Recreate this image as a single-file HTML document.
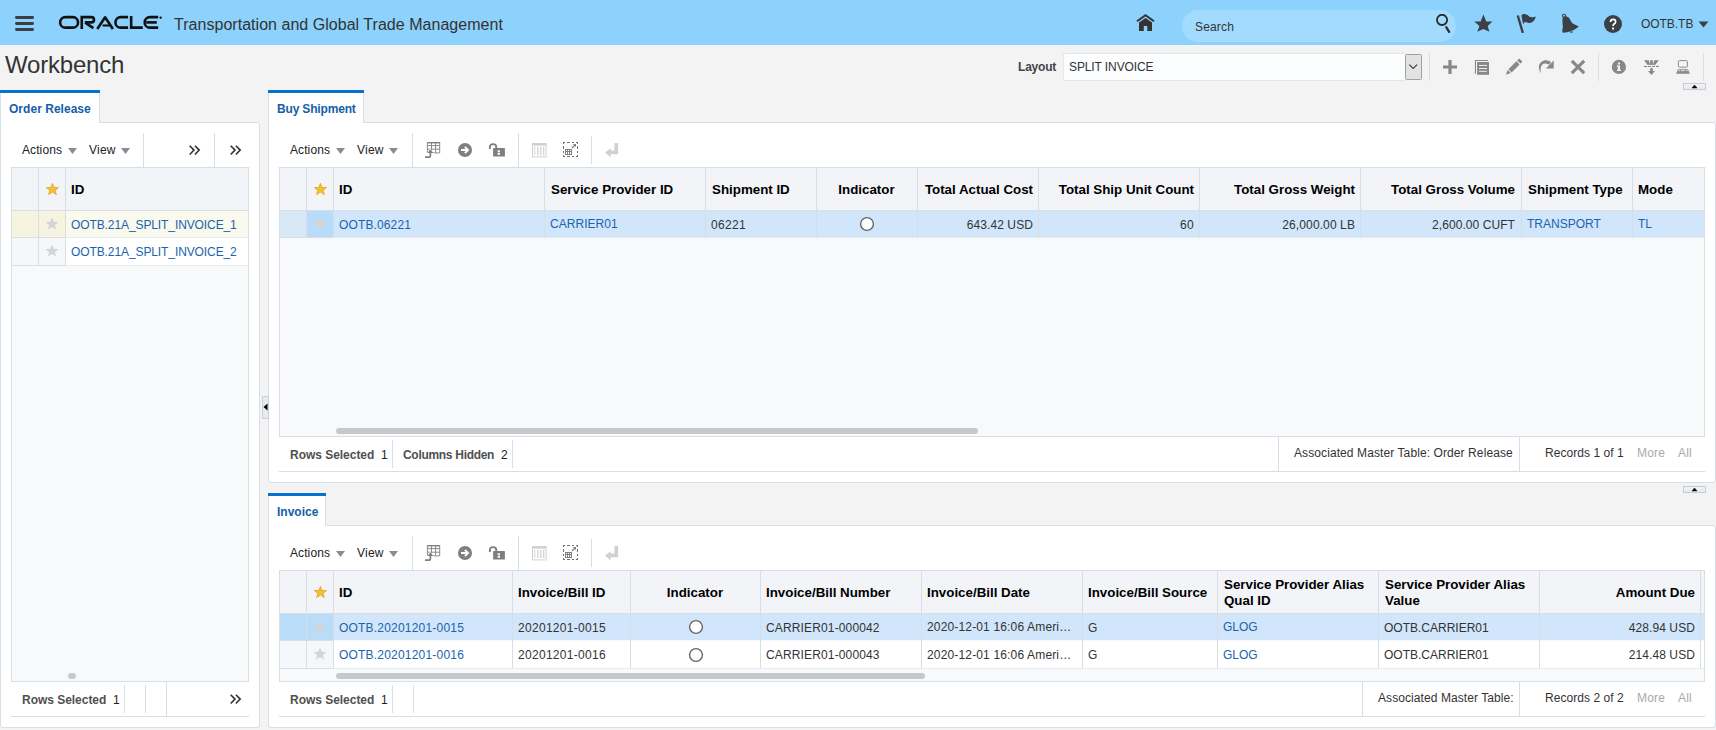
<!DOCTYPE html>
<html><head><meta charset="utf-8"><style>
html,body{margin:0;padding:0}
body{width:1716px;height:730px;overflow:hidden;position:relative;background:#f3f3f3;font-family:"Liberation Sans",sans-serif}
.t{position:absolute;white-space:nowrap}
.b{position:absolute;display:block}
</style></head><body>
<div class="b" style="left:0px;top:0px;width:1716px;height:45px;background:#8dd2fc"></div>
<svg class="b" style="left:14px;top:0px;" width="21" height="45" viewBox="0 0 21 45"><rect x="1" y="16.1" width="19" height="2.8" rx="1.4" fill="#3a3f44"/><rect x="1" y="22.1" width="19" height="2.8" rx="1.4" fill="#3a3f44"/><rect x="1" y="28.1" width="19" height="2.8" rx="1.4" fill="#3a3f44"/></svg>
<svg class="b" style="left:55px;top:12px;" width="110" height="22" viewBox="0 0 110 22"><g fill="none" stroke="#111" stroke-width="2.6">
<rect x="5.15" y="5.15" width="17.9" height="10.5" rx="5.25"/>
<path d="M26.75 16.9 V5.15 H36.4 A2.6 2.6 0 0 1 36.4 10.35 H29.8"/><path d="M30.3 10.6 L38.4 16.1" stroke-width="2.8"/>
<path d="M42.3 16.9 L50.1 5.3 L57.9 16.9" stroke-linejoin="round"/>
<path d="M47.6 13.5 H55.2" stroke-width="2.1"/>
<path d="M73.1 5.15 H65.7 A5.25 5.25 0 0 0 65.7 15.65 H73.1"/>
<path d="M76.15 4 V15.65 H87.8"/>
<path d="M103.2 5.15 H94.9 A5.25 5.25 0 0 0 94.9 15.65 H103.2"/>
<path d="M91.2 10.4 H101.8"/>
</g><circle cx="105.7" cy="5.6" r="1.2" fill="#111"/></svg>
<div class="t" style="left:174px;top:16.46px;font-size:16px;line-height:18px;font-weight:400;color:#333;letter-spacing:0.030px;">Transportation and Global Trade Management</div>
<svg class="b" style="left:1136px;top:13px;" width="19" height="19" viewBox="0 0 19 19"><path d="M1 8.2 L9.5 2.2 L18 8.2" fill="none" stroke="#333" stroke-width="2"/>
<path d="M3 9.5 L9.5 5 L16 9.5 V18 H11.3 V13 H7.8 V18 H3 Z" fill="#333"/></svg>
<div class="b" style="left:1182px;top:10px;width:274px;height:32px;background:#a2dbfd;border-radius:16px"></div>
<div class="t" style="left:1195px;top:19.84px;font-size:12px;line-height:14px;font-weight:400;color:#333;letter-spacing:0.164px;">Search</div>
<svg class="b" style="left:1435px;top:14px;" width="17" height="19" viewBox="0 0 17 19"><circle cx="7.05" cy="5.9" r="5.1" fill="none" stroke="#2a2a2a" stroke-width="1.8"/>
<path d="M11.2 13.1 L14.1 17.9" stroke="#2a2a2a" stroke-width="2.2" stroke-linecap="round"/></svg>
<svg class="b" style="left:1474px;top:14px;" width="19" height="19" viewBox="0 0 19 19"><path d="M9.4 0.5 L12.3 7.4 L18.4 7.4 L13.7 11.9 L15.4 17.8 L9.4 15 L3.3 17.8 L5.4 11.9 L0.3 7.4 L6.6 7.4 Z" fill="#3b4046"/></svg>
<svg class="b" style="left:1516px;top:13px;" width="21" height="20" viewBox="0 0 21 20"><path d="M2 3.4 L6.6 19.1" stroke="#3b4046" stroke-width="2.3" stroke-linecap="round"/>
<path d="M5.4 2.4 Q7 0.6 8.9 1.1 Q11.5 1.8 13.7 3.7 Q16.5 5 19.8 3.5 Q19 7 17.6 8.1 Q15.5 10.3 13.2 10.1 Q11 9.7 9.3 9 Q7.8 9.2 7.1 11.2 Z" fill="#3b4046"/></svg>
<svg class="b" style="left:1561px;top:13px;" width="19" height="21" viewBox="0 0 19 21"><circle cx="3" cy="2.8" r="1.6" fill="none" stroke="#3b4046" stroke-width="1.1"/>
<path d="M1.8 4.8 Q3.5 3 5.7 3.4 Q8.5 4 9.4 7.2 Q10.5 10 13.2 11.2 L17.8 13.4 Q14.5 16.5 11 17.7 Q6 19.5 2.1 19.8 Q1 19 1.3 17 Q2.3 14 1.6 10.5 Q1 7 1.8 4.8 Z" fill="#3b4046"/>
<path d="M9.2 18.6 Q10.5 19.9 11.8 18.7" fill="none" stroke="#3b4046" stroke-width="1.1"/></svg>
<svg class="b" style="left:1604px;top:15px;" width="18" height="18" viewBox="0 0 18 18"><circle cx="9" cy="9" r="9" fill="#3b4046"/>
<path d="M6.5 7 Q6.5 4.4 9.1 4.4 Q11.6 4.4 11.6 6.7 Q11.6 8.1 10.1 9 Q9.1 9.6 9.1 11" fill="none" stroke="#fff" stroke-width="1.7"/>
<rect x="8.1" y="12.5" width="2" height="2" fill="#fff"/></svg>
<div class="t" style="left:1641px;top:16.84px;font-size:12px;line-height:14px;font-weight:400;color:#333;letter-spacing:-0.048px;">OOTB.TB</div>
<svg class="b" style="left:1698px;top:21px;" width="11" height="7" viewBox="0 0 11 7"><path d="M0.5 0.5 H10.5 L5.5 6.5 Z" fill="#3b4046"/></svg>
<div class="t" style="left:5px;top:50.68px;font-size:24px;line-height:28px;font-weight:400;color:#333;letter-spacing:-0.192px;">Workbench</div>
<div class="t" style="left:1018px;top:59.84px;font-size:12px;line-height:14px;font-weight:700;color:#444;letter-spacing:-0.200px;">Layout</div>
<div class="b" style="left:1063px;top:53px;width:343px;height:28px;background:#fcfdfe;border:1px solid #e2e7ea;border-right:none;border-radius:2px 0 0 2px;box-sizing:border-box"></div>
<div class="t" style="left:1069px;top:59.84px;font-size:12px;line-height:14px;font-weight:400;color:#333;letter-spacing:-0.103px;">SPLIT INVOICE</div>
<div class="b" style="left:1405px;top:54px;width:17px;height:26px;background:#e2e2e2;border:1px solid #a2a2a2;border-radius:1.5px;box-sizing:border-box"></div>
<svg class="b" style="left:1408px;top:63px;" width="11" height="7" viewBox="0 0 11 7"><path d="M1.3 1.6 L5.2 5.4 L9.1 1.6" fill="none" stroke="#444" stroke-width="1.3"/></svg>
<div class="b" style="left:1429px;top:53px;width:1px;height:28px;background:#d6dfe6"></div>
<svg class="b" style="left:1442px;top:59px;" width="16" height="16" viewBox="0 0 16 16"><path d="M8 1 V15 M1 8 H15" stroke="#868889" stroke-width="3.2"/></svg>
<svg class="b" style="left:1472px;top:58px;" width="19" height="19" viewBox="0 0 19 19"><path d="M3.45 15.8 V2.45 H16" fill="none" stroke="#868889" stroke-width="1.1"/>
<rect x="5.1" y="4" width="11.9" height="12.8" fill="#868889"/>
<path d="M7 7.45 H14.9 M7 10.5 H14.9 M7 13.35 H14.9" stroke="#f3f3f3" stroke-width="0.95"/></svg>
<svg class="b" style="left:1504px;top:58px;" width="19" height="19" viewBox="0 0 19 19"><path d="M1.9 16.8 L3.6 11.9 L6.8 15.1 Z" fill="#868889"/>
<path d="M4.4 11.2 L12.4 3.2 L15.6 6.4 L7.6 14.4 Z" fill="#868889"/>
<path d="M13.2 2.4 L14.6 1 Q15.2 0.5 15.8 1 L17.8 3 Q18.3 3.6 17.8 4.2 L16.4 5.6 Z" fill="#868889"/></svg>
<svg class="b" style="left:1537px;top:58px;" width="18" height="17" viewBox="0 0 18 17"><path d="M3.8 15.3 C1.2 11 1.2 6.5 4.3 4 C7.3 1.5 11 1.8 14 4.2 L12 6.8 C9.5 5 7 5 5.2 6.8 C3.5 8.5 3.3 11.5 3.8 15.3 Z" fill="#868889"/>
<path d="M16.7 2.4 V10.6 H8.9 Z" fill="#868889"/></svg>
<svg class="b" style="left:1570px;top:59px;" width="16" height="16" viewBox="0 0 16 16"><path d="M1.8 1.8 L14.2 14.2 M14.2 1.8 L1.8 14.2" stroke="#868889" stroke-width="3.1"/></svg>
<div class="b" style="left:1598px;top:53px;width:1px;height:28px;background:#d6dfe6"></div>
<svg class="b" style="left:1611px;top:59px;" width="16" height="16" viewBox="0 0 16 16"><circle cx="7.9" cy="7.9" r="7.1" fill="#868889"/>
<rect x="6.9" y="3.6" width="2.1" height="1.9" fill="#f3f3f3"/>
<path d="M5.9 6.6 H9 V10.8 H10 V12.1 H5.9 V10.8 H6.9 V7.9 H5.9 Z" fill="#f3f3f3"/></svg>
<svg class="b" style="left:1642px;top:58px;" width="19" height="19" viewBox="0 0 19 19"><path d="M1.9 2.2 H6.9 L7.7 6 L5.5 6.7 Z M12.2 2.2 H16.9 L13.3 6.7 L11.3 6 Z" fill="#868889"/>
<rect x="8.2" y="2.2" width="2.6" height="4.5" fill="#868889"/><rect x="5.5" y="5.7" width="7.8" height="1" fill="#868889"/>
<rect x="1.9" y="7.9" width="3.1" height="1.1" fill="#868889"/><rect x="6" y="7.9" width="2.9" height="1.1" fill="#868889"/>
<rect x="10.1" y="7.9" width="2.9" height="1.1" fill="#868889"/><rect x="14" y="7.9" width="3" height="1.1" fill="#868889"/>
<rect x="8.2" y="10.1" width="2.6" height="3.1" fill="#868889"/><path d="M6 13.1 H13 L9.5 17 Z" fill="#868889"/></svg>
<svg class="b" style="left:1675px;top:58px;" width="16" height="17" viewBox="0 0 16 17"><rect x="3.4" y="2.6" width="9" height="6.6" rx="1" fill="none" stroke="#868889" stroke-width="0.95"/>
<path d="M2.9 11.3 H12.9 L14.9 15.8 H1 Z" fill="#868889"/>
<path d="M3.2 12.65 H4.9 M5.9 12.65 H9.8 M10.9 12.65 H12.6" stroke="#f3f3f3" stroke-width="0.9"/></svg>
<div class="b" style="left:1703px;top:53px;width:1px;height:28px;background:#d6dfe6"></div>
<div class="b" style="left:0px;top:90px;width:100px;height:33px;background:#fff;border-left:1px solid #d6dfe6;border-right:1px solid #d6dfe6;box-sizing:border-box"></div>
<div class="b" style="left:0px;top:90px;width:100px;height:3px;background:#0572ce"></div>
<div class="t" style="left:9px;top:101.84px;font-size:12px;line-height:14px;font-weight:700;color:#155ea8;letter-spacing:0.030px;">Order Release</div>
<div class="b" style="left:0px;top:122px;width:260px;height:606px;background:#fff;border:1px solid #d6dfe6;border-radius:3px;box-sizing:border-box"></div>
<div class="b" style="left:1px;top:122px;width:98px;height:1px;background:#fff"></div>
<div class="t" style="left:22px;top:142.84px;font-size:12px;line-height:14px;font-weight:400;color:#222;letter-spacing:0.093px;">Actions</div>
<svg class="b" style="left:68px;top:148px;" width="9" height="6" viewBox="0 0 9 6"><path d="M0 0 H9 L4.5 6 Z" fill="#8a8c8f"/></svg>
<div class="t" style="left:89px;top:142.84px;font-size:12px;line-height:14px;font-weight:400;color:#222;letter-spacing:0.249px;">View</div>
<svg class="b" style="left:121px;top:148px;" width="9" height="6" viewBox="0 0 9 6"><path d="M0 0 H9 L4.5 6 Z" fill="#8a8c8f"/></svg>
<div class="b" style="left:143px;top:133px;width:1px;height:34px;background:#d6dfe6"></div>
<svg class="b" style="left:189px;top:145px;" width="12" height="11" viewBox="0 0 12 11"><path d="M0.7 0.7 L5 5.1 L0.7 9.5 M5.9 0.7 L10.2 5.1 L5.9 9.5" fill="none" stroke="#333" stroke-width="1.6"/></svg>
<div class="b" style="left:214px;top:133px;width:1px;height:34px;background:#d6dfe6"></div>
<svg class="b" style="left:230px;top:145px;" width="12" height="11" viewBox="0 0 12 11"><path d="M0.7 0.7 L5 5.1 L0.7 9.5 M5.9 0.7 L10.2 5.1 L5.9 9.5" fill="none" stroke="#333" stroke-width="1.6"/></svg>
<div class="b" style="left:11px;top:167px;width:238px;height:515px;background:#f7f9fb"></div>
<div class="b" style="left:11px;top:167px;width:238px;height:43px;background:#f2f4f7"></div>
<div class="b" style="left:11px;top:211px;width:54px;height:26px;background:#f4f4e1"></div>
<div class="b" style="left:65px;top:211px;width:183px;height:26px;background:#f9f9ee"></div>
<div class="b" style="left:11px;top:238px;width:54px;height:27px;background:#f5f7fa"></div>
<div class="b" style="left:65px;top:238px;width:183px;height:27px;background:#fff"></div>
<div class="b" style="left:11px;top:167px;width:238px;height:1px;background:#d6dfe6"></div>
<div class="b" style="left:11px;top:681px;width:238px;height:1px;background:#d6dfe6"></div>
<div class="b" style="left:11px;top:167px;width:1px;height:515px;background:#d6dfe6"></div>
<div class="b" style="left:248px;top:167px;width:1px;height:515px;background:#d6dfe6"></div>
<div class="b" style="left:11px;top:210px;width:238px;height:1px;background:#d6dfe6"></div>
<div class="b" style="left:11px;top:237px;width:55px;height:1px;background:#d6dfe6"></div>
<div class="b" style="left:65px;top:237px;width:184px;height:1px;background:#e6ebef"></div>
<div class="b" style="left:11px;top:265px;width:55px;height:1px;background:#d6dfe6"></div>
<div class="b" style="left:65px;top:265px;width:184px;height:1px;background:#e6ebef"></div>
<div class="b" style="left:38px;top:167px;width:1px;height:99px;background:#d6dfe6"></div>
<div class="b" style="left:65px;top:167px;width:1px;height:99px;background:#d6dfe6"></div>
<svg class="b" style="left:45.5px;top:182.5px;" width="14" height="13" viewBox="0 0 14 13"><path transform="scale(0.92)" d="M7 0.4 L8.75 4.85 L13.6 5 L9.85 8.1 L11.25 12.6 L7 9.9 L2.75 12.6 L4.15 8.1 L0.4 5 L5.25 4.85 Z" fill="#f5c12e" stroke="#d9a21b" stroke-width="0.8" stroke-linejoin="round"/></svg>
<div class="t" style="left:71px;top:181.88px;font-size:13.33px;line-height:15px;font-weight:700;color:#000;">ID</div>
<svg class="b" style="left:45px;top:217px;" width="14" height="13" viewBox="0 0 14 13"><path transform="scale(1.0)" d="M7 0.4 L8.75 4.85 L13.6 5 L9.85 8.1 L11.25 12.6 L7 9.9 L2.75 12.6 L4.15 8.1 L0.4 5 L5.25 4.85 Z" fill="#d4d4d4"/></svg>
<svg class="b" style="left:45px;top:244px;" width="14" height="13" viewBox="0 0 14 13"><path transform="scale(1.0)" d="M7 0.4 L8.75 4.85 L13.6 5 L9.85 8.1 L11.25 12.6 L7 9.9 L2.75 12.6 L4.15 8.1 L0.4 5 L5.25 4.85 Z" fill="#d4d4d4"/></svg>
<div class="t" style="left:71px;top:217.84px;font-size:12px;line-height:14px;font-weight:400;color:#1b63ae;letter-spacing:-0.099px;">OOTB.21A_SPLIT_INVOICE_1</div>
<div class="t" style="left:71px;top:244.84px;font-size:12px;line-height:14px;font-weight:400;color:#1b63ae;letter-spacing:-0.099px;">OOTB.21A_SPLIT_INVOICE_2</div>
<div class="b" style="left:68px;top:673px;width:8px;height:6px;background:#c7c9cc;border-radius:3px"></div>
<div class="t" style="left:22px;top:692.84px;font-size:12px;line-height:14px;font-weight:700;color:#505050;letter-spacing:-0.030px;">Rows Selected</div>
<div class="t" style="left:113px;top:692.84px;font-size:12px;line-height:14px;font-weight:400;color:#222;letter-spacing:0.326px;">1</div>
<div class="b" style="left:124px;top:685px;width:1px;height:28px;background:#d6dfe6"></div>
<div class="b" style="left:145px;top:685px;width:1px;height:28px;background:#d6dfe6"></div>
<div class="b" style="left:166px;top:682px;width:1px;height:35px;background:#d6dfe6"></div>
<svg class="b" style="left:230px;top:694px;" width="12" height="11" viewBox="0 0 12 11"><path d="M0.7 0.7 L5 5.1 L0.7 9.5 M5.9 0.7 L10.2 5.1 L5.9 9.5" fill="none" stroke="#333" stroke-width="1.6"/></svg>
<div class="b" style="left:11px;top:716px;width:238px;height:1px;background:#d6dfe6"></div>
<div class="b" style="left:268px;top:90px;width:96px;height:33px;background:#fff;border-left:1px solid #d6dfe6;border-right:1px solid #d6dfe6;box-sizing:border-box"></div>
<div class="b" style="left:268px;top:90px;width:96px;height:3px;background:#0572ce"></div>
<div class="t" style="left:277px;top:101.84px;font-size:12px;line-height:14px;font-weight:700;color:#155ea8;letter-spacing:-0.170px;">Buy Shipment</div>
<div class="b" style="left:268px;top:122px;width:1448px;height:361px;background:#fff;border:1px solid #d6dfe6;border-radius:3px;box-sizing:border-box"></div>
<div class="b" style="left:269px;top:122px;width:94px;height:1px;background:#fff"></div>
<div class="t" style="left:290px;top:142.84px;font-size:12px;line-height:14px;font-weight:400;color:#222;letter-spacing:0.093px;">Actions</div>
<svg class="b" style="left:336px;top:148px;" width="9" height="6" viewBox="0 0 9 6"><path d="M0 0 H9 L4.5 6 Z" fill="#8a8c8f"/></svg>
<div class="t" style="left:357px;top:142.84px;font-size:12px;line-height:14px;font-weight:400;color:#222;letter-spacing:0.249px;">View</div>
<svg class="b" style="left:389px;top:148px;" width="9" height="6" viewBox="0 0 9 6"><path d="M0 0 H9 L4.5 6 Z" fill="#8a8c8f"/></svg>
<div class="b" style="left:412px;top:133px;width:1px;height:34px;background:#d6dfe6"></div>
<svg class="b" style="left:424px;top:141px;" width="18" height="18" viewBox="0 0 18 18"><path d="M3.5 1 H15.8 V2.4 H3.5 Z" fill="#7d7f82"/>
<path d="M3.4 1 V11.9 H15.7 V1 M3.4 4.6 H15.7 M3.4 8.2 H15.7 M7.5 1 V11.9 M11.6 1 V11.9" fill="none" stroke="#7d7f82" stroke-width="0.9"/>
<path d="M2.3 13 L6.3 7.3 L10.3 13 L7.8 13 V16.5 H2.3 Z" fill="#fff"/>
<path d="M1 16.2 H5.1 Q6.4 16.2 6.4 14.9 V11" fill="none" stroke="#7d7f82" stroke-width="1.7"/>
<path d="M3.4 11.9 L6.4 8.2 L9.4 11.9 Z" fill="#7d7f82"/></svg>
<svg class="b" style="left:458px;top:143px;" width="15" height="15" viewBox="0 0 15 15"><circle cx="7" cy="7" r="7" fill="#7d7f82"/>
<path d="M3 7 H9.6 M6.9 3.9 L10 7 L6.9 10.1" fill="none" stroke="#fff" stroke-width="2"/></svg>
<svg class="b" style="left:488px;top:142px;" width="18" height="17" viewBox="0 0 18 17"><path d="M1.9 6.9 V5.3 Q1.9 2.1 5.1 2.1 Q8.3 2.1 8.3 5.3 V6.5" fill="none" stroke="#7d7f82" stroke-width="1.9"/>
<rect x="5.1" y="6" width="11.8" height="8.6" rx="0.6" fill="#7d7f82"/>
<rect x="9.6" y="8.3" width="2.4" height="1.6" fill="#fff"/><rect x="9.6" y="10.7" width="2.4" height="2.1" fill="#fff"/></svg>
<div class="b" style="left:518px;top:133px;width:1px;height:34px;background:#d6dfe6"></div>
<svg class="b" style="left:532px;top:143px;" width="15" height="15" viewBox="0 0 15 15"><rect x="0.5" y="0.5" width="13.6" height="13.4" fill="none" stroke="#cfd1d3" stroke-width="1"/>
<path d="M0.5 0.5 H14.1 V2.6 H0.5 Z" fill="#cfd1d3"/>
<path d="M5.9 3.8 V12.2 M8.8 3.8 V12.2 M11.7 3.8 V12.2" stroke="#cfd1d3" stroke-width="1.3"/>
<path d="M3.2 3.6 L2.4 5 L3.2 6.4 L2.4 7.8 L3.2 9.2 L2.4 10.6 L3.2 12" fill="none" stroke="#cfd1d3" stroke-width="0.9"/></svg>
<svg class="b" style="left:563px;top:142px;" width="16" height="16" viewBox="0 0 16 16"><g fill="#6f7174"><rect x="0" y="0" width="2" height="1"/><rect x="0" y="14" width="2" height="1"/><rect x="4" y="0" width="3" height="1"/><rect x="4" y="14" width="3" height="1"/><rect x="9" y="0" width="2" height="1"/><rect x="9" y="14" width="2" height="1"/><rect x="13" y="0" width="2" height="1"/><rect x="13" y="14" width="2" height="1"/><rect x="0" y="0" width="1" height="2"/><rect x="14" y="0" width="1" height="2"/><rect x="0" y="4" width="1" height="3"/><rect x="14" y="4" width="1" height="3"/><rect x="0" y="9" width="1" height="2"/><rect x="14" y="9" width="1" height="2"/><rect x="0" y="13" width="1" height="2"/><rect x="14" y="13" width="1" height="2"/></g>
<path d="M9 6 L12 3" stroke="#7d7f82" stroke-width="1.2"/><path d="M10 2 H13 V5 Z" fill="#7d7f82"/>
<rect x="2.5" y="7.5" width="6" height="5" fill="none" stroke="#7d7f82" stroke-width="1"/>
<path d="M2.5 9.5 H8.5 M4.5 7.5 V12.5 M6.5 7.5 V12.5" stroke="#7d7f82" stroke-width="1"/></svg>
<div class="b" style="left:591px;top:136px;width:1px;height:28px;background:#d6dfe6"></div>
<svg class="b" style="left:604px;top:142px;" width="15" height="16" viewBox="0 0 15 16"><path d="M12.3 1 V10.3 H5.6" fill="none" stroke="#cfd1d3" stroke-width="3.7"/>
<path d="M1 10.5 L6.6 6.2 V15.6 Z" fill="#cfd1d3"/></svg>
<div class="b" style="left:1683px;top:83px;width:23px;height:7px;background:linear-gradient(#f2f3f5,#e6e9ec);border:1px solid #c5ced6;box-sizing:border-box"></div>
<svg class="b" style="left:1691px;top:84px;" width="7" height="5" viewBox="0 0 7 5"><path d="M1 4 L6 4 L3.5 1 Z" fill="#000" stroke="#000" stroke-width="0.5" stroke-linejoin="round"/></svg>
<div class="b" style="left:279px;top:167px;width:1426px;height:270px;background:#f7f9fb"></div>
<div class="b" style="left:279px;top:167px;width:1426px;height:43px;background:#f2f4f7"></div>
<div class="b" style="left:279px;top:211px;width:27px;height:26px;background:#d8e7f5"></div>
<div class="b" style="left:306px;top:211px;width:27px;height:26px;background:#b9ddf9"></div>
<div class="b" style="left:333px;top:211px;width:1371px;height:26px;background:#d1e6fa"></div>
<div class="b" style="left:279px;top:167px;width:1426px;height:1px;background:#d6dfe6"></div>
<div class="b" style="left:279px;top:436px;width:1426px;height:1px;background:#d6dfe6"></div>
<div class="b" style="left:279px;top:167px;width:1px;height:270px;background:#d6dfe6"></div>
<div class="b" style="left:1704px;top:167px;width:1px;height:270px;background:#d6dfe6"></div>
<div class="b" style="left:279px;top:210px;width:1426px;height:1px;background:#d6dfe6"></div>
<div class="b" style="left:279px;top:237px;width:55px;height:1px;background:#d6dfe6"></div>
<div class="b" style="left:333px;top:237px;width:1372px;height:1px;background:#e6ebef"></div>
<div class="b" style="left:306px;top:167px;width:1px;height:71px;background:#d6dfe6"></div>
<div class="b" style="left:333px;top:167px;width:1px;height:71px;background:#d6dfe6"></div>
<div class="b" style="left:544px;top:167px;width:1px;height:71px;background:#d6dfe6"></div>
<div class="b" style="left:705px;top:167px;width:1px;height:71px;background:#d6dfe6"></div>
<div class="b" style="left:816px;top:167px;width:1px;height:71px;background:#d6dfe6"></div>
<div class="b" style="left:917px;top:167px;width:1px;height:71px;background:#d6dfe6"></div>
<div class="b" style="left:1038px;top:167px;width:1px;height:71px;background:#d6dfe6"></div>
<div class="b" style="left:1199px;top:167px;width:1px;height:71px;background:#d6dfe6"></div>
<div class="b" style="left:1360px;top:167px;width:1px;height:71px;background:#d6dfe6"></div>
<div class="b" style="left:1521px;top:167px;width:1px;height:71px;background:#d6dfe6"></div>
<div class="b" style="left:1632px;top:167px;width:1px;height:71px;background:#d6dfe6"></div>
<svg class="b" style="left:313.5px;top:182.5px;" width="14" height="13" viewBox="0 0 14 13"><path transform="scale(0.92)" d="M7 0.4 L8.75 4.85 L13.6 5 L9.85 8.1 L11.25 12.6 L7 9.9 L2.75 12.6 L4.15 8.1 L0.4 5 L5.25 4.85 Z" fill="#f5c12e" stroke="#d9a21b" stroke-width="0.8" stroke-linejoin="round"/></svg>
<svg class="b" style="left:313px;top:217px;" width="14" height="13" viewBox="0 0 14 13"><path transform="scale(1.0)" d="M7 0.4 L8.75 4.85 L13.6 5 L9.85 8.1 L11.25 12.6 L7 9.9 L2.75 12.6 L4.15 8.1 L0.4 5 L5.25 4.85 Z" fill="#d4d4d4"/></svg>
<div class="t" style="left:339px;top:181.88px;font-size:13.33px;line-height:15px;font-weight:700;color:#000;">ID</div>
<div class="t" style="left:551px;top:181.88px;font-size:13.33px;line-height:15px;font-weight:700;color:#000;">Service Provider ID</div>
<div class="t" style="left:712px;top:181.88px;font-size:13.33px;line-height:15px;font-weight:700;color:#000;">Shipment ID</div>
<div class="t" style="left:566.5px;width:600px;text-align:center;top:181.88px;font-size:13.33px;line-height:15px;font-weight:700;color:#000;">Indicator</div>
<div class="t" style="left:433px;width:600px;text-align:right;top:181.88px;font-size:13.33px;line-height:15px;font-weight:700;color:#000;">Total Actual Cost</div>
<div class="t" style="left:594px;width:600px;text-align:right;top:181.88px;font-size:13.33px;line-height:15px;font-weight:700;color:#000;">Total Ship Unit Count</div>
<div class="t" style="left:755px;width:600px;text-align:right;top:181.88px;font-size:13.33px;line-height:15px;font-weight:700;color:#000;">Total Gross Weight</div>
<div class="t" style="left:915px;width:600px;text-align:right;top:181.88px;font-size:13.33px;line-height:15px;font-weight:700;color:#000;">Total Gross Volume</div>
<div class="t" style="left:1528px;top:181.88px;font-size:13.33px;line-height:15px;font-weight:700;color:#000;">Shipment Type</div>
<div class="t" style="left:1638px;top:181.88px;font-size:13.33px;line-height:15px;font-weight:700;color:#000;">Mode</div>
<div class="t" style="left:339px;top:217.84px;font-size:12px;line-height:14px;font-weight:400;color:#1b63ae;letter-spacing:0.130px;">OOTB.06221</div>
<div class="t" style="left:550px;top:216.84px;font-size:12px;line-height:14px;font-weight:400;color:#1b63ae;letter-spacing:0.035px;">CARRIER01</div>
<div class="t" style="left:711px;top:217.84px;font-size:12px;line-height:14px;font-weight:400;color:#333333;letter-spacing:0.326px;">06221</div>
<svg class="b" style="left:859px;top:216px;" width="16" height="16" viewBox="0 0 16 16"><circle cx="8" cy="8" r="6.4" fill="#fff" stroke="#666" stroke-width="1.4"/></svg>
<div class="t" style="left:433px;width:600px;text-align:right;top:217.84px;font-size:12px;line-height:14px;font-weight:400;color:#333333;letter-spacing:0.096px;">643.42 USD</div>
<div class="t" style="left:594px;width:600px;text-align:right;top:217.84px;font-size:12px;line-height:14px;font-weight:400;color:#333333;letter-spacing:0.326px;">60</div>
<div class="t" style="left:755px;width:600px;text-align:right;top:217.84px;font-size:12px;line-height:14px;font-weight:400;color:#333333;letter-spacing:0.107px;">26,000.00 LB</div>
<div class="t" style="left:915px;width:600px;text-align:right;top:217.84px;font-size:12px;line-height:14px;font-weight:400;color:#333333;letter-spacing:0.073px;">2,600.00 CUFT</div>
<div class="t" style="left:1527px;top:216.84px;font-size:12px;line-height:14px;font-weight:400;color:#1b63ae;">TRANSPORT</div>
<div class="t" style="left:1638px;top:216.84px;font-size:12px;line-height:14px;font-weight:400;color:#1b63ae;">TL</div>
<div class="b" style="left:336px;top:428px;width:642px;height:6px;background:#c6c8cc;border-radius:3px"></div>
<div class="t" style="left:290px;top:447.84px;font-size:12px;line-height:14px;font-weight:700;color:#505050;letter-spacing:-0.030px;">Rows Selected</div>
<div class="t" style="left:381px;top:447.84px;font-size:12px;line-height:14px;font-weight:400;color:#222;letter-spacing:0.326px;">1</div>
<div class="b" style="left:392px;top:440px;width:1px;height:28px;background:#d6dfe6"></div>
<div class="t" style="left:403px;top:447.84px;font-size:12px;line-height:14px;font-weight:700;color:#505050;letter-spacing:-0.300px;">Columns Hidden</div>
<div class="t" style="left:501px;top:447.84px;font-size:12px;line-height:14px;font-weight:400;color:#222;letter-spacing:0.326px;">2</div>
<div class="b" style="left:512px;top:440px;width:1px;height:28px;background:#d6dfe6"></div>
<div class="b" style="left:1278px;top:437px;width:1px;height:35px;background:#d6dfe6"></div>
<div class="t" style="left:1294px;top:445.84px;font-size:12px;line-height:14px;font-weight:400;color:#333;letter-spacing:0.094px;">Associated Master Table: Order Release</div>
<div class="b" style="left:1519px;top:437px;width:1px;height:35px;background:#d6dfe6"></div>
<div class="t" style="left:1545px;top:445.84px;font-size:12px;line-height:14px;font-weight:400;color:#333;letter-spacing:0.045px;">Records 1 of 1</div>
<div class="t" style="left:1637px;top:445.84px;font-size:12px;line-height:14px;font-weight:400;color:#aaa;letter-spacing:0.164px;">More</div>
<div class="t" style="left:1678px;top:445.84px;font-size:12px;line-height:14px;font-weight:400;color:#aaa;letter-spacing:0.223px;">All</div>
<div class="b" style="left:279px;top:471px;width:1426px;height:1px;background:#d6dfe6"></div>
<div class="b" style="left:268px;top:493px;width:58px;height:33px;background:#fff;border-left:1px solid #d6dfe6;border-right:1px solid #d6dfe6;box-sizing:border-box"></div>
<div class="b" style="left:268px;top:493px;width:58px;height:3px;background:#0572ce"></div>
<div class="t" style="left:277px;top:504.84px;font-size:12px;line-height:14px;font-weight:700;color:#155ea8;">Invoice</div>
<div class="b" style="left:268px;top:525px;width:1448px;height:203px;background:#fff;border:1px solid #d6dfe6;border-radius:3px;box-sizing:border-box"></div>
<div class="b" style="left:269px;top:525px;width:56px;height:1px;background:#fff"></div>
<div class="t" style="left:290px;top:545.84px;font-size:12px;line-height:14px;font-weight:400;color:#222;letter-spacing:0.093px;">Actions</div>
<svg class="b" style="left:336px;top:551px;" width="9" height="6" viewBox="0 0 9 6"><path d="M0 0 H9 L4.5 6 Z" fill="#8a8c8f"/></svg>
<div class="t" style="left:357px;top:545.84px;font-size:12px;line-height:14px;font-weight:400;color:#222;letter-spacing:0.249px;">View</div>
<svg class="b" style="left:389px;top:551px;" width="9" height="6" viewBox="0 0 9 6"><path d="M0 0 H9 L4.5 6 Z" fill="#8a8c8f"/></svg>
<div class="b" style="left:412px;top:536px;width:1px;height:34px;background:#d6dfe6"></div>
<svg class="b" style="left:424px;top:544px;" width="18" height="18" viewBox="0 0 18 18"><path d="M3.5 1 H15.8 V2.4 H3.5 Z" fill="#7d7f82"/>
<path d="M3.4 1 V11.9 H15.7 V1 M3.4 4.6 H15.7 M3.4 8.2 H15.7 M7.5 1 V11.9 M11.6 1 V11.9" fill="none" stroke="#7d7f82" stroke-width="0.9"/>
<path d="M2.3 13 L6.3 7.3 L10.3 13 L7.8 13 V16.5 H2.3 Z" fill="#fff"/>
<path d="M1 16.2 H5.1 Q6.4 16.2 6.4 14.9 V11" fill="none" stroke="#7d7f82" stroke-width="1.7"/>
<path d="M3.4 11.9 L6.4 8.2 L9.4 11.9 Z" fill="#7d7f82"/></svg>
<svg class="b" style="left:458px;top:546px;" width="15" height="15" viewBox="0 0 15 15"><circle cx="7" cy="7" r="7" fill="#7d7f82"/>
<path d="M3 7 H9.6 M6.9 3.9 L10 7 L6.9 10.1" fill="none" stroke="#fff" stroke-width="2"/></svg>
<svg class="b" style="left:488px;top:545px;" width="18" height="17" viewBox="0 0 18 17"><path d="M1.9 6.9 V5.3 Q1.9 2.1 5.1 2.1 Q8.3 2.1 8.3 5.3 V6.5" fill="none" stroke="#7d7f82" stroke-width="1.9"/>
<rect x="5.1" y="6" width="11.8" height="8.6" rx="0.6" fill="#7d7f82"/>
<rect x="9.6" y="8.3" width="2.4" height="1.6" fill="#fff"/><rect x="9.6" y="10.7" width="2.4" height="2.1" fill="#fff"/></svg>
<div class="b" style="left:518px;top:536px;width:1px;height:34px;background:#d6dfe6"></div>
<svg class="b" style="left:532px;top:546px;" width="15" height="15" viewBox="0 0 15 15"><rect x="0.5" y="0.5" width="13.6" height="13.4" fill="none" stroke="#cfd1d3" stroke-width="1"/>
<path d="M0.5 0.5 H14.1 V2.6 H0.5 Z" fill="#cfd1d3"/>
<path d="M5.9 3.8 V12.2 M8.8 3.8 V12.2 M11.7 3.8 V12.2" stroke="#cfd1d3" stroke-width="1.3"/>
<path d="M3.2 3.6 L2.4 5 L3.2 6.4 L2.4 7.8 L3.2 9.2 L2.4 10.6 L3.2 12" fill="none" stroke="#cfd1d3" stroke-width="0.9"/></svg>
<svg class="b" style="left:563px;top:545px;" width="16" height="16" viewBox="0 0 16 16"><g fill="#6f7174"><rect x="0" y="0" width="2" height="1"/><rect x="0" y="14" width="2" height="1"/><rect x="4" y="0" width="3" height="1"/><rect x="4" y="14" width="3" height="1"/><rect x="9" y="0" width="2" height="1"/><rect x="9" y="14" width="2" height="1"/><rect x="13" y="0" width="2" height="1"/><rect x="13" y="14" width="2" height="1"/><rect x="0" y="0" width="1" height="2"/><rect x="14" y="0" width="1" height="2"/><rect x="0" y="4" width="1" height="3"/><rect x="14" y="4" width="1" height="3"/><rect x="0" y="9" width="1" height="2"/><rect x="14" y="9" width="1" height="2"/><rect x="0" y="13" width="1" height="2"/><rect x="14" y="13" width="1" height="2"/></g>
<path d="M9 6 L12 3" stroke="#7d7f82" stroke-width="1.2"/><path d="M10 2 H13 V5 Z" fill="#7d7f82"/>
<rect x="2.5" y="7.5" width="6" height="5" fill="none" stroke="#7d7f82" stroke-width="1"/>
<path d="M2.5 9.5 H8.5 M4.5 7.5 V12.5 M6.5 7.5 V12.5" stroke="#7d7f82" stroke-width="1"/></svg>
<div class="b" style="left:591px;top:539px;width:1px;height:28px;background:#d6dfe6"></div>
<svg class="b" style="left:604px;top:545px;" width="15" height="16" viewBox="0 0 15 16"><path d="M12.3 1 V10.3 H5.6" fill="none" stroke="#cfd1d3" stroke-width="3.7"/>
<path d="M1 10.5 L6.6 6.2 V15.6 Z" fill="#cfd1d3"/></svg>
<div class="b" style="left:1683px;top:486px;width:23px;height:7px;background:linear-gradient(#f2f3f5,#e6e9ec);border:1px solid #c5ced6;box-sizing:border-box"></div>
<svg class="b" style="left:1691px;top:487px;" width="7" height="5" viewBox="0 0 7 5"><path d="M1 4 L6 4 L3.5 1 Z" fill="#000" stroke="#000" stroke-width="0.5" stroke-linejoin="round"/></svg>
<div class="b" style="left:279px;top:570px;width:1426px;height:112px;background:#f7f9fb"></div>
<div class="b" style="left:279px;top:570px;width:1426px;height:43px;background:#f2f4f7"></div>
<div class="b" style="left:279px;top:614px;width:27px;height:26px;background:#b9ddf9"></div>
<div class="b" style="left:306px;top:614px;width:27px;height:26px;background:#b9ddf9"></div>
<div class="b" style="left:333px;top:614px;width:1371px;height:26px;background:#d1e6fa"></div>
<div class="b" style="left:279px;top:641px;width:54px;height:27px;background:#f5f7fa"></div>
<div class="b" style="left:333px;top:641px;width:1371px;height:27px;background:#fff"></div>
<div class="b" style="left:279px;top:570px;width:1426px;height:1px;background:#d6dfe6"></div>
<div class="b" style="left:279px;top:681px;width:1426px;height:1px;background:#d6dfe6"></div>
<div class="b" style="left:279px;top:570px;width:1px;height:112px;background:#d6dfe6"></div>
<div class="b" style="left:1704px;top:570px;width:1px;height:112px;background:#d6dfe6"></div>
<div class="b" style="left:279px;top:613px;width:1426px;height:1px;background:#d6dfe6"></div>
<div class="b" style="left:279px;top:640px;width:55px;height:1px;background:#d6dfe6"></div>
<div class="b" style="left:279px;top:668px;width:55px;height:1px;background:#d6dfe6"></div>
<div class="b" style="left:306px;top:570px;width:1px;height:99px;background:#d6dfe6"></div>
<div class="b" style="left:333px;top:570px;width:1px;height:99px;background:#d6dfe6"></div>
<div class="b" style="left:512px;top:570px;width:1px;height:99px;background:#d6dfe6"></div>
<div class="b" style="left:630px;top:570px;width:1px;height:99px;background:#d6dfe6"></div>
<div class="b" style="left:760px;top:570px;width:1px;height:99px;background:#d6dfe6"></div>
<div class="b" style="left:921px;top:570px;width:1px;height:99px;background:#d6dfe6"></div>
<div class="b" style="left:1082px;top:570px;width:1px;height:99px;background:#d6dfe6"></div>
<div class="b" style="left:1217px;top:570px;width:1px;height:99px;background:#d6dfe6"></div>
<div class="b" style="left:1378px;top:570px;width:1px;height:99px;background:#d6dfe6"></div>
<div class="b" style="left:1539px;top:570px;width:1px;height:99px;background:#d6dfe6"></div>
<div class="b" style="left:1700px;top:570px;width:1px;height:99px;background:#d6dfe6"></div>
<div class="b" style="left:333px;top:668px;width:1372px;height:1px;background:#e6ebef"></div>
<svg class="b" style="left:313.5px;top:585.5px;" width="14" height="13" viewBox="0 0 14 13"><path transform="scale(0.92)" d="M7 0.4 L8.75 4.85 L13.6 5 L9.85 8.1 L11.25 12.6 L7 9.9 L2.75 12.6 L4.15 8.1 L0.4 5 L5.25 4.85 Z" fill="#f5c12e" stroke="#d9a21b" stroke-width="0.8" stroke-linejoin="round"/></svg>
<svg class="b" style="left:313px;top:620px;" width="14" height="13" viewBox="0 0 14 13"><path transform="scale(1.0)" d="M7 0.4 L8.75 4.85 L13.6 5 L9.85 8.1 L11.25 12.6 L7 9.9 L2.75 12.6 L4.15 8.1 L0.4 5 L5.25 4.85 Z" fill="#d4d4d4"/></svg>
<svg class="b" style="left:313px;top:647px;" width="14" height="13" viewBox="0 0 14 13"><path transform="scale(1.0)" d="M7 0.4 L8.75 4.85 L13.6 5 L9.85 8.1 L11.25 12.6 L7 9.9 L2.75 12.6 L4.15 8.1 L0.4 5 L5.25 4.85 Z" fill="#d4d4d4"/></svg>
<div class="t" style="left:339px;top:584.88px;font-size:13.33px;line-height:15px;font-weight:700;color:#000;">ID</div>
<div class="t" style="left:518px;top:584.88px;font-size:13.33px;line-height:15px;font-weight:700;color:#000;">Invoice/Bill ID</div>
<div class="t" style="left:395px;width:600px;text-align:center;top:584.88px;font-size:13.33px;line-height:15px;font-weight:700;color:#000;">Indicator</div>
<div class="t" style="left:766px;top:584.88px;font-size:13.33px;line-height:15px;font-weight:700;color:#000;">Invoice/Bill Number</div>
<div class="t" style="left:927px;top:584.88px;font-size:13.33px;line-height:15px;font-weight:700;color:#000;">Invoice/Bill Date</div>
<div class="t" style="left:1088px;top:584.88px;font-size:13.33px;line-height:15px;font-weight:700;color:#000;">Invoice/Bill Source</div>
<div class="t" style="left:1224px;top:576.88px;font-size:13.33px;line-height:15px;font-weight:700;color:#000;">Service Provider Alias</div>
<div class="t" style="left:1224px;top:592.88px;font-size:13.33px;line-height:15px;font-weight:700;color:#000;">Qual ID</div>
<div class="t" style="left:1385px;top:576.88px;font-size:13.33px;line-height:15px;font-weight:700;color:#000;">Service Provider Alias</div>
<div class="t" style="left:1385px;top:592.88px;font-size:13.33px;line-height:15px;font-weight:700;color:#000;">Value</div>
<div class="t" style="left:1095px;width:600px;text-align:right;top:584.88px;font-size:13.33px;line-height:15px;font-weight:700;color:#000;">Amount Due</div>
<div class="t" style="left:339px;top:620.84px;font-size:12px;line-height:14px;font-weight:400;color:#1b63ae;letter-spacing:0.199px;">OOTB.20201201-0015</div>
<div class="t" style="left:518px;top:620.84px;font-size:12px;line-height:14px;font-weight:400;color:#333333;letter-spacing:0.301px;">20201201-0015</div>
<svg class="b" style="left:687.8px;top:619px;" width="16" height="16" viewBox="0 0 16 16"><circle cx="8" cy="8" r="6.4" fill="#fff" stroke="#666" stroke-width="1.4"/></svg>
<div class="t" style="left:766px;top:620.84px;font-size:12px;line-height:14px;font-weight:400;color:#333333;letter-spacing:0.142px;">CARRIER01-000042</div>
<div class="t" style="left:927px;top:619.84px;font-size:12px;line-height:14px;font-weight:400;color:#333333;letter-spacing:0.156px;">2020-12-01 16:06 Ameri…</div>
<div class="t" style="left:1088px;top:620.84px;font-size:12px;line-height:14px;font-weight:400;color:#333333;">G</div>
<div class="t" style="left:1223px;top:619.84px;font-size:12px;line-height:14px;font-weight:400;color:#1b63ae;">GLOG</div>
<div class="t" style="left:1384px;top:620.84px;font-size:12px;line-height:14px;font-weight:400;color:#333333;">OOTB.CARRIER01</div>
<div class="t" style="left:1095px;width:600px;text-align:right;top:620.84px;font-size:12px;line-height:14px;font-weight:400;color:#333333;letter-spacing:0.096px;">428.94 USD</div>
<div class="t" style="left:339px;top:647.84px;font-size:12px;line-height:14px;font-weight:400;color:#1b63ae;letter-spacing:0.199px;">OOTB.20201201-0016</div>
<div class="t" style="left:518px;top:647.84px;font-size:12px;line-height:14px;font-weight:400;color:#333333;letter-spacing:0.301px;">20201201-0016</div>
<svg class="b" style="left:687.8px;top:647px;" width="16" height="16" viewBox="0 0 16 16"><circle cx="8" cy="8" r="6.4" fill="#fff" stroke="#666" stroke-width="1.4"/></svg>
<div class="t" style="left:766px;top:647.84px;font-size:12px;line-height:14px;font-weight:400;color:#333333;letter-spacing:0.142px;">CARRIER01-000043</div>
<div class="t" style="left:927px;top:647.84px;font-size:12px;line-height:14px;font-weight:400;color:#333333;letter-spacing:0.156px;">2020-12-01 16:06 Ameri…</div>
<div class="t" style="left:1088px;top:647.84px;font-size:12px;line-height:14px;font-weight:400;color:#333333;">G</div>
<div class="t" style="left:1223px;top:647.84px;font-size:12px;line-height:14px;font-weight:400;color:#1b63ae;">GLOG</div>
<div class="t" style="left:1384px;top:647.84px;font-size:12px;line-height:14px;font-weight:400;color:#333333;">OOTB.CARRIER01</div>
<div class="t" style="left:1095px;width:600px;text-align:right;top:647.84px;font-size:12px;line-height:14px;font-weight:400;color:#333333;letter-spacing:0.096px;">214.48 USD</div>
<div class="b" style="left:336px;top:673px;width:589px;height:6px;background:#c6c8cc;border-radius:3px"></div>
<div class="t" style="left:290px;top:692.84px;font-size:12px;line-height:14px;font-weight:700;color:#505050;letter-spacing:-0.030px;">Rows Selected</div>
<div class="t" style="left:381px;top:692.84px;font-size:12px;line-height:14px;font-weight:400;color:#222;letter-spacing:0.326px;">1</div>
<div class="b" style="left:392px;top:685px;width:1px;height:28px;background:#d6dfe6"></div>
<div class="b" style="left:413px;top:685px;width:1px;height:28px;background:#d6dfe6"></div>
<div class="b" style="left:1362px;top:682px;width:1px;height:35px;background:#d6dfe6"></div>
<div class="t" style="left:1378px;top:690.84px;font-size:12px;line-height:14px;font-weight:400;color:#333;letter-spacing:0.081px;">Associated Master Table:</div>
<div class="b" style="left:1519px;top:682px;width:1px;height:35px;background:#d6dfe6"></div>
<div class="t" style="left:1545px;top:690.84px;font-size:12px;line-height:14px;font-weight:400;color:#333;letter-spacing:0.045px;">Records 2 of 2</div>
<div class="t" style="left:1637px;top:690.84px;font-size:12px;line-height:14px;font-weight:400;color:#aaa;letter-spacing:0.164px;">More</div>
<div class="t" style="left:1678px;top:690.84px;font-size:12px;line-height:14px;font-weight:400;color:#aaa;letter-spacing:0.223px;">All</div>
<div class="b" style="left:279px;top:716px;width:1426px;height:1px;background:#d6dfe6"></div>
<div class="b" style="left:262px;top:396px;width:7px;height:23px;background:#e8ebee;border:1px solid #c9d0d6;box-sizing:border-box"></div>
<svg class="b" style="left:263px;top:403px;" width="5" height="8" viewBox="0 0 5 8"><path d="M4.5 0.5 V7.5 L0.5 4 Z" fill="#000"/></svg>
</body></html>
